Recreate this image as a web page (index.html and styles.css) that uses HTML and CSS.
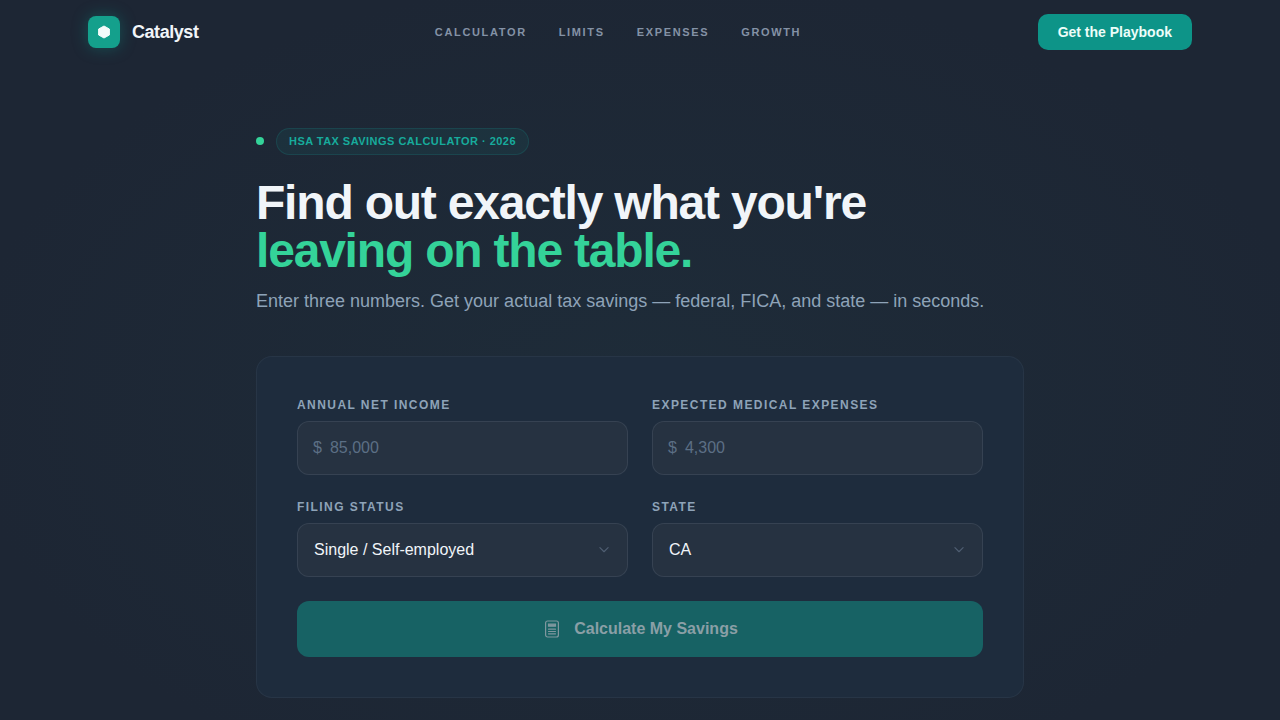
FILE: index.html
```html
<!DOCTYPE html>
<html lang="en">
  <head>
    <meta charset="UTF-8" />
    <title>Catalyst - HSA Tax Savings Calculator</title>
    <link rel="stylesheet" href="styles.css">
  </head>
  <body>
    <header class="nav">
      <div class="brand">
        <span class="brand-mark">
          <svg width="14" height="14" viewBox="0 0 14 14"><path d="M7 1 12.4 4v6L7 13 1.6 10V4z" fill="#f4fbfa" stroke="#f4fbfa" stroke-linejoin="round"/></svg>
        </span>
        <span class="brand-name">Catalyst</span>
      </div>
      <nav class="nav-links">
        <a href="#">Calculator</a>
        <a href="#">Limits</a>
        <a href="#">Expenses</a>
        <a href="#">Growth</a>
      </nav>
      <a class="nav-cta" href="#">Get the Playbook</a>
    </header>

    <main class="main">
      <div class="eyebrow">
        <span class="dot"></span>
        <span class="pill">HSA Tax Savings Calculator · 2026</span>
      </div>
      <h1>Find out exactly what you're<br /><span class="accent">leaving on the table.</span></h1>
      <p class="lead">Enter three numbers. Get your actual tax savings — federal, FICA, and state — in seconds.</p>

      <form class="card">
        <div class="grid">
          <div class="field">
            <label>Annual Net Income</label>
            <div class="control money">
              <span class="prefix">$</span>
              <span class="placeholder">85,000</span>
            </div>
          </div>
          <div class="field">
            <label>Expected Medical Expenses</label>
            <div class="control money">
              <span class="prefix">$</span>
              <span class="placeholder">4,300</span>
            </div>
          </div>
          <div class="field">
            <label>Filing Status</label>
            <div class="control select">
              <span>Single / Self-employed</span>
              <svg width="14" height="14" viewBox="0 0 24 24" fill="none" stroke="#4f5e72" stroke-width="2" stroke-linecap="round" stroke-linejoin="round"><path d="m5 8 7 7 7-7"/></svg>
            </div>
          </div>
          <div class="field">
            <label>State</label>
            <div class="control select">
              <span>CA</span>
              <svg width="14" height="14" viewBox="0 0 24 24" fill="none" stroke="#4f5e72" stroke-width="2" stroke-linecap="round" stroke-linejoin="round"><path d="m5 8 7 7 7-7"/></svg>
            </div>
          </div>
        </div>
        <button class="submit" type="button">
          <svg width="16" height="18" viewBox="0 0 16 18" fill="none" stroke="#7f979e" stroke-width="1.2" stroke-linecap="round"><rect x="1.6" y="1" width="12.8" height="16" rx="2"/><path d="M4.5 4.2h7v2h-7z" fill="#7f979e"/><path d="M4.5 9.2h7M4.5 11.5h7M4.5 13.8h7"/></svg>
          <span class="submit-label">Calculate My Savings</span>
        </button>
      </form>
    </main>
  </body>
</html>
```

FILE: styles.css
```css
* {
  box-sizing: border-box;
}

html,
body {
  height: 720px;
  overflow: hidden;
}

body {
  margin: 0;
  font-family: "Liberation Sans", Arial, sans-serif;
  color: #fff;
  background-color: #1d2634;
  background-image: radial-gradient(ellipse at 50% 55%, #1e2c39 0%, #1d2634 75%);
}

a {
  text-decoration: none;
}

/* top bar */
.nav {
  display: flex;
  align-items: center;
  justify-content: space-between;
  height: 64px;
  padding: 0 88px;
}

.brand {
  display: flex;
  align-items: center;
  gap: 12px;
}

.brand-mark {
  display: flex;
  align-items: center;
  justify-content: center;
  width: 32px;
  height: 32px;
  border-radius: 8px;
  background: #14a08c;
  box-shadow: 0 0 16px rgba(13, 148, 136, 0.4);
}

.brand-name {
  font-size: 18px;
  font-weight: 700;
  letter-spacing: -0.45px;
  color: #f1f5f9;
}

.nav-links {
  display: flex;
  gap: 32px;
}

.nav-links a {
  font-size: 11px;
  font-weight: 700;
  letter-spacing: 1.65px;
  text-transform: uppercase;
  color: #8492a6;
}

.nav-cta {
  padding: 10px 20px;
  height: 36px;
  border-radius: 10px;
  background: #0d9488;
  font-size: 14px;
  font-weight: 700;
  line-height: 16px;
  color: #ecfdf9;
}

/* hero */
.main {
  width: 768px;
  margin: 0 auto;
  padding-top: 64px;
}

.eyebrow {
  display: flex;
  align-items: center;
  gap: 12px;
  margin-bottom: 24px;
}

.dot {
  width: 8px;
  height: 8px;
  margin-top: -1px;
  border-radius: 50%;
  background: #34d399;
}

.pill {
  padding: 0 12px;
  height: 27px;
  border: 1px solid rgba(20, 184, 166, 0.15);
  border-radius: 14px;
  background: rgba(20, 184, 166, 0.08);
  font-size: 11px;
  font-weight: 700;
  line-height: 25px;
  letter-spacing: 0.47px;
  text-transform: uppercase;
  color: #17ab9c;
}

h1 {
  margin: 0 0 12px;
  font-size: 48px;
  font-weight: 700;
  line-height: 48px;
  letter-spacing: -1.2px;
  color: #f1f5f9;
}

.accent {
  color: #34d399;
}

.lead {
  margin: 0 0 42px;
  padding-top: 1px;
  font-size: 18px;
  line-height: 26px;
  color: #8ea3b8;
}

/* calculator card */
.card {
  height: 342px;
  padding: 40px;
  border: 1px solid rgba(148, 163, 184, 0.08);
  border-radius: 16px;
  background: #1e2c3d;
}

.grid {
  display: grid;
  grid-template-columns: 1fr 1fr;
  gap: 24px;
  margin-bottom: 24px;
}

.field label {
  display: block;
  margin-bottom: 8px;
  font-size: 12px;
  font-weight: 700;
  line-height: 16px;
  letter-spacing: 1.44px;
  text-transform: uppercase;
  color: #8ea3b8;
}

.control {
  display: flex;
  align-items: center;
  height: 54px;
  padding: 0 16px;
  border: 1px solid rgba(148, 163, 184, 0.15);
  border-radius: 12px;
  background: #263241;
  font-size: 16px;
}

.money {
  padding-left: 15px;
}

.prefix {
  margin-right: 8px;
  color: #5c6f85;
}

.placeholder {
  color: #5c6f85;
}

.select {
  justify-content: space-between;
  color: #f1f5f9;
}

.submit {
  display: flex;
  align-items: center;
  justify-content: center;
  gap: 14px;
  width: 100%;
  height: 56px;
  padding: 0 0 0 2px;
  border: none;
  border-radius: 12px;
  background: #176264;
  font-family: inherit;
  font-size: 16px;
  font-weight: 700;
  color: #8a9fa6;
}
```
